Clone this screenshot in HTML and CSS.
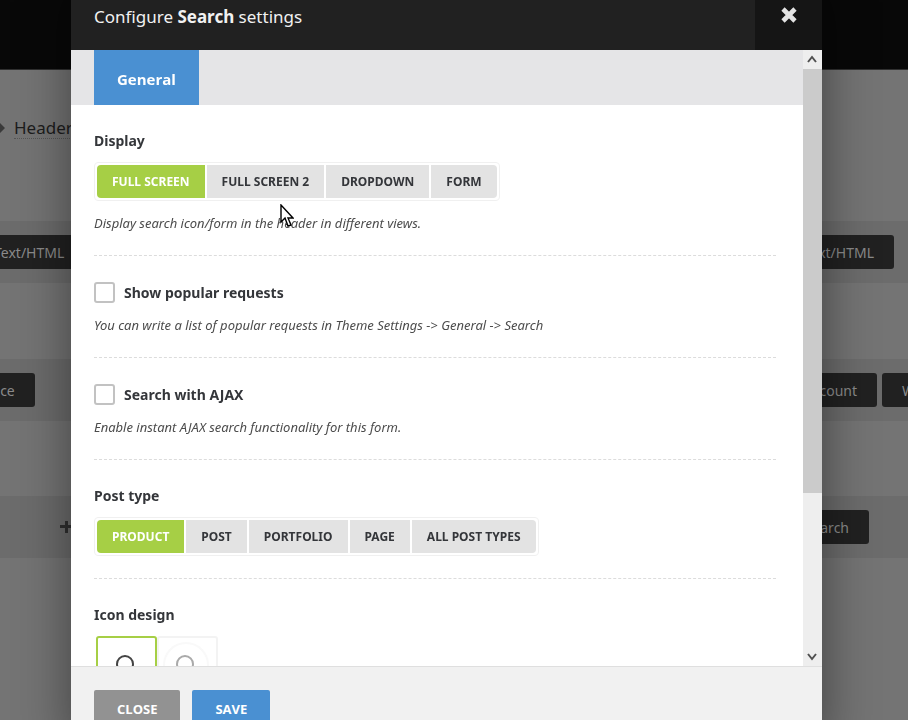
FILE: index.html
```html
<!DOCTYPE html>
<html lang="en">
<head>
    <meta charset="UTF-8">
    <meta name="viewport" content="width=device-width, initial-scale=1.0">
    <title>Header builder</title>
    <link rel="stylesheet" href="styles.css">
</head>
<body>
    <!-- Header builder -->
    <div class="builder">
        <div class="builder-top"></div>
        <div class="builder-name">
            <svg class="builder-arrow" width="16" height="16" viewBox="0 0 16 16"><path d="M8 1l7 7-7 7V11H0V5h8z" fill="#3a3a3a"/></svg>
            <span>Header builder</span>
        </div>
        <div class="builder-row row-top">
            <span class="element">Text/HTML</span>
            <span class="element">Text/HTML</span>
        </div>
        <div class="builder-row row-main">
            <span class="element">Space</span>
            <div class="element-list">
                <span class="element">My account</span>
                <span class="element">Wishlist</span>
            </div>
        </div>
        <div class="builder-row row-bottom">
            <svg width="14" height="14" viewBox="0 0 14 14"><path d="M5 1h3v4h5v3H8v5H5V8H0V5h5z" fill="#303030"/></svg>
            <span class="element">Search</span>
        </div>
    </div>

    <!-- Settings popup -->
    <div class="overlay">
        <div class="popup" role="dialog" aria-labelledby="popup-title">
            <div class="popup-header">
                <h2 id="popup-title">Configure <strong>Search</strong> settings</h2>
                <button type="button" class="popup-close" aria-label="Close popup">
                    <svg width="18" height="18" viewBox="0 0 18 18"><path d="M3 3l12 12M15 3L3 15" stroke="#e4e4e4" stroke-width="4.6"/></svg>
                </button>
            </div>

            <div class="popup-body">
                <form class="popup-content" id="settings">
                    <div class="tabs">
                        <button type="button" class="tab">General</button>
                    </div>

                    <div class="field" role="group" aria-labelledby="label-display">
                        <h3 id="label-display">Display</h3>
                        <div class="button-set">
                            <button type="button" class="active">Full screen</button>
                            <button type="button">Full screen 2</button>
                            <button type="button">Dropdown</button>
                            <button type="button">Form</button>
                        </div>
                        <p class="description">Display search icon/form in the header in different views.</p>
                    </div>

                    <div class="field">
                        <label class="check">
                            <input type="checkbox" name="popular">
                            Show popular requests
                        </label>
                        <p class="description">You can write a list of popular requests in Theme Settings -&gt; General -&gt; Search</p>
                    </div>

                    <div class="field">
                        <label class="check">
                            <input type="checkbox" name="ajax">
                            Search with AJAX
                        </label>
                        <p class="description">Enable instant AJAX search functionality for this form.</p>
                    </div>

                    <div class="field" role="group" aria-labelledby="label-post-type">
                        <h3 id="label-post-type">Post type</h3>
                        <div class="button-set">
                            <button type="button" class="active">Product</button>
                            <button type="button">Post</button>
                            <button type="button">Portfolio</button>
                            <button type="button">Page</button>
                            <button type="button">All post types</button>
                        </div>
                    </div>

                    <div class="field" role="group" aria-labelledby="label-icon">
                        <h3 id="label-icon">Icon design</h3>
                        <div class="image-set">
                            <button type="button" class="active" aria-label="Default icon">
                                <svg width="57" height="56" viewBox="0 0 57 56"><circle cx="27" cy="26" r="8" fill="none" stroke="#444" stroke-width="2"/><path d="M33 32l7 7" stroke="#444" stroke-width="2"/></svg>
                            </button>
                            <button type="button" aria-label="Icon in circle">
                                <svg width="57" height="56" viewBox="0 0 57 56"><circle cx="27" cy="27" r="22" fill="none" stroke="#f9f9f9" stroke-width="2"/><circle cx="26" cy="26" r="8" fill="none" stroke="#aaa" stroke-width="2"/><path d="M32 32l7 7" stroke="#aaa" stroke-width="2"/></svg>
                            </button>
                        </div>
                    </div>
                </form>

                <div class="scrollbar" aria-hidden="true">
                    <svg width="19" height="19" viewBox="0 0 19 19"><path d="M5 12l4-5 4 5" fill="none" stroke="#505050" stroke-width="2"/></svg>
                    <div class="scrollbar-thumb"></div>
                    <div class="scrollbar-rest"></div>
                    <svg width="19" height="19" viewBox="0 0 19 19"><path d="M5 7l4 5 4-5" fill="none" stroke="#505050" stroke-width="2"/></svg>
                </div>
            </div>

            <div class="popup-footer">
                <button type="button" class="btn btn-close">Close</button>
                <button type="submit" form="settings" class="btn btn-save">Save</button>
            </div>
        </div>
    </div>

    <svg class="cursor" width="14" height="24" viewBox="0 0 14 24"><path d="M1 1v17l4-4 3 8 3-1-3-7h5z" fill="#fff" stroke="#000" stroke-width="1.4"/></svg>
</body>
</html>
```

FILE: styles.css
```css
* {
    box-sizing: border-box;
}

body {
    margin: 0;
    height: 100vh;
    overflow: hidden;
    background: #747474;
    color: #34363a;
    font-family: "Noto Sans", "Open Sans", sans-serif;
    font-size: 13px;
    line-height: 20px;
}

button {
    border: 0;
    padding: 0;
    font: inherit;
    cursor: pointer;
}

svg {
    display: block;
}

/* Header builder */
.builder {
    overflow: hidden;
}

.builder-top {
    height: 70px;
    background: #080808;
    border-bottom: 1px solid #303030;
}

.builder-name {
    display: flex;
    align-items: center;
    gap: 8px;
    height: 116px;
    margin-left: -10px;
    color: #1c1c1c;
    font-size: 17px;
}

.builder-name span {
    border-bottom: 1px dotted #555;
}

.builder-row {
    display: flex;
    align-items: center;
    justify-content: space-between;
    height: 62px;
    background: #6c6c6c;
}

.row-top {
    margin: 35px 0 76px;
    padding-right: 14px;
    margin-left: -26px;
}

.row-main {
    margin-bottom: 75px;
    margin-left: -44px;
    margin-right: -65px;
}

.row-bottom {
    padding: 0 39px 0 60px;
}

.element-list {
    display: flex;
    gap: 5px;
}

.element {
    padding: 8px 20px 6px;
    border-radius: 3px;
    background: #212121;
    color: #8a8a8a;
    font-size: 14px;
}

/* Popup */
.overlay {
    position: fixed;
    inset: 0;
    display: flex;
    padding: 0 86px 0 71px;
}

.popup {
    display: flex;
    flex: 1;
    flex-direction: column;
    min-width: 0;
    margin: -16px 0 -30px;
    background: #fff;
    box-shadow: 0 0 50px rgba(0, 0, 0, 0.45);
}

.popup-header {
    display: flex;
    align-items: center;
    justify-content: space-between;
    height: 66px;
    padding-left: 23px;
    background: #212121;
    color: #f1f1f1;
}

.popup-header h2 {
    margin: 0;
    font-size: 17px;
    font-weight: 400;
}

.popup-header strong {
    font-weight: 700;
}

.popup-close {
    display: flex;
    align-items: center;
    justify-content: center;
    width: 67px;
    height: 100%;
    padding-bottom: 4px;
    background: #151515;
}

.popup-body {
    display: flex;
    flex: 1;
    min-height: 0;
}

.popup-content {
    flex: 1;
    overflow: hidden;
}

.tabs {
    display: flex;
    padding: 0 23px;
    background: #e5e5e7;
}

.tab {
    height: 55px;
    padding: 2px 23px 0;
    background: #4a90d2;
    color: #fff;
    font-family: "Open Sans", sans-serif;
    font-size: 15px;
    font-weight: 700;
}

.field {
    margin: 0 27px 0 23px;
    padding: 26px 0 22px;
    border-bottom: 1px dashed #dcdcdc;
}

.field h3 {
    margin: 0 0 11px;
    font-size: 14px;
    font-weight: 700;
}

.description {
    margin: 12px 0 0;
    color: #4c4c4c;
    font-style: italic;
}

.button-set {
    display: inline-flex;
    vertical-align: top;
    gap: 2px;
    padding: 2px;
    border: 1px solid #f0f0f0;
    border-radius: 4px;
}

.button-set button {
    height: 33px;
    padding: 0 15px;
    background: #e3e3e3;
    color: #34363a;
    font-size: 12px;
    font-weight: 700;
    text-transform: uppercase;
}

.button-set button:first-child {
    border-radius: 4px 0 0 4px;
}

.button-set button:last-child {
    border-radius: 0 4px 4px 0;
}

.button-set .active {
    background: #a6cf45;
    color: #fff;
}

.check {
    display: flex;
    align-items: center;
    gap: 9px;
    height: 21px;
    font-size: 14px;
    font-weight: 700;
}

.check input {
    appearance: none;
    width: 21px;
    height: 21px;
    margin: 0;
    border: 2px solid #c2c2c2;
    border-radius: 3px;
    background: #fff;
}

.image-set {
    display: flex;
}

.image-set button {
    border: 2px solid #f3f3f3;
    border-radius: 3px;
    background: #fff;
}

.image-set .active {
    margin-left: 2px;
    border-color: #a6cf45;
}

.scrollbar {
    display: flex;
    flex-direction: column;
    width: 19px;
    background: #eee;
}

.scrollbar-thumb {
    flex: 11;
    background: #cbcbcb;
}

.scrollbar-rest {
    flex: 4;
}

.popup-footer {
    display: flex;
    gap: 12px;
    height: 84px;
    padding: 23px;
    border-top: 1px solid #dfdfdf;
    background: #f1f1f1;
}

.btn {
    height: 37px;
    padding: 0 23px;
    border-radius: 2px;
    color: #fff;
    font-family: "Open Sans", sans-serif;
    font-weight: 700;
    text-transform: uppercase;
}

.btn-close {
    background: #929292;
}

.btn-save {
    background: #4a90d2;
}

.cursor {
    position: absolute;
    top: 204px;
    left: 280px;
}
```
